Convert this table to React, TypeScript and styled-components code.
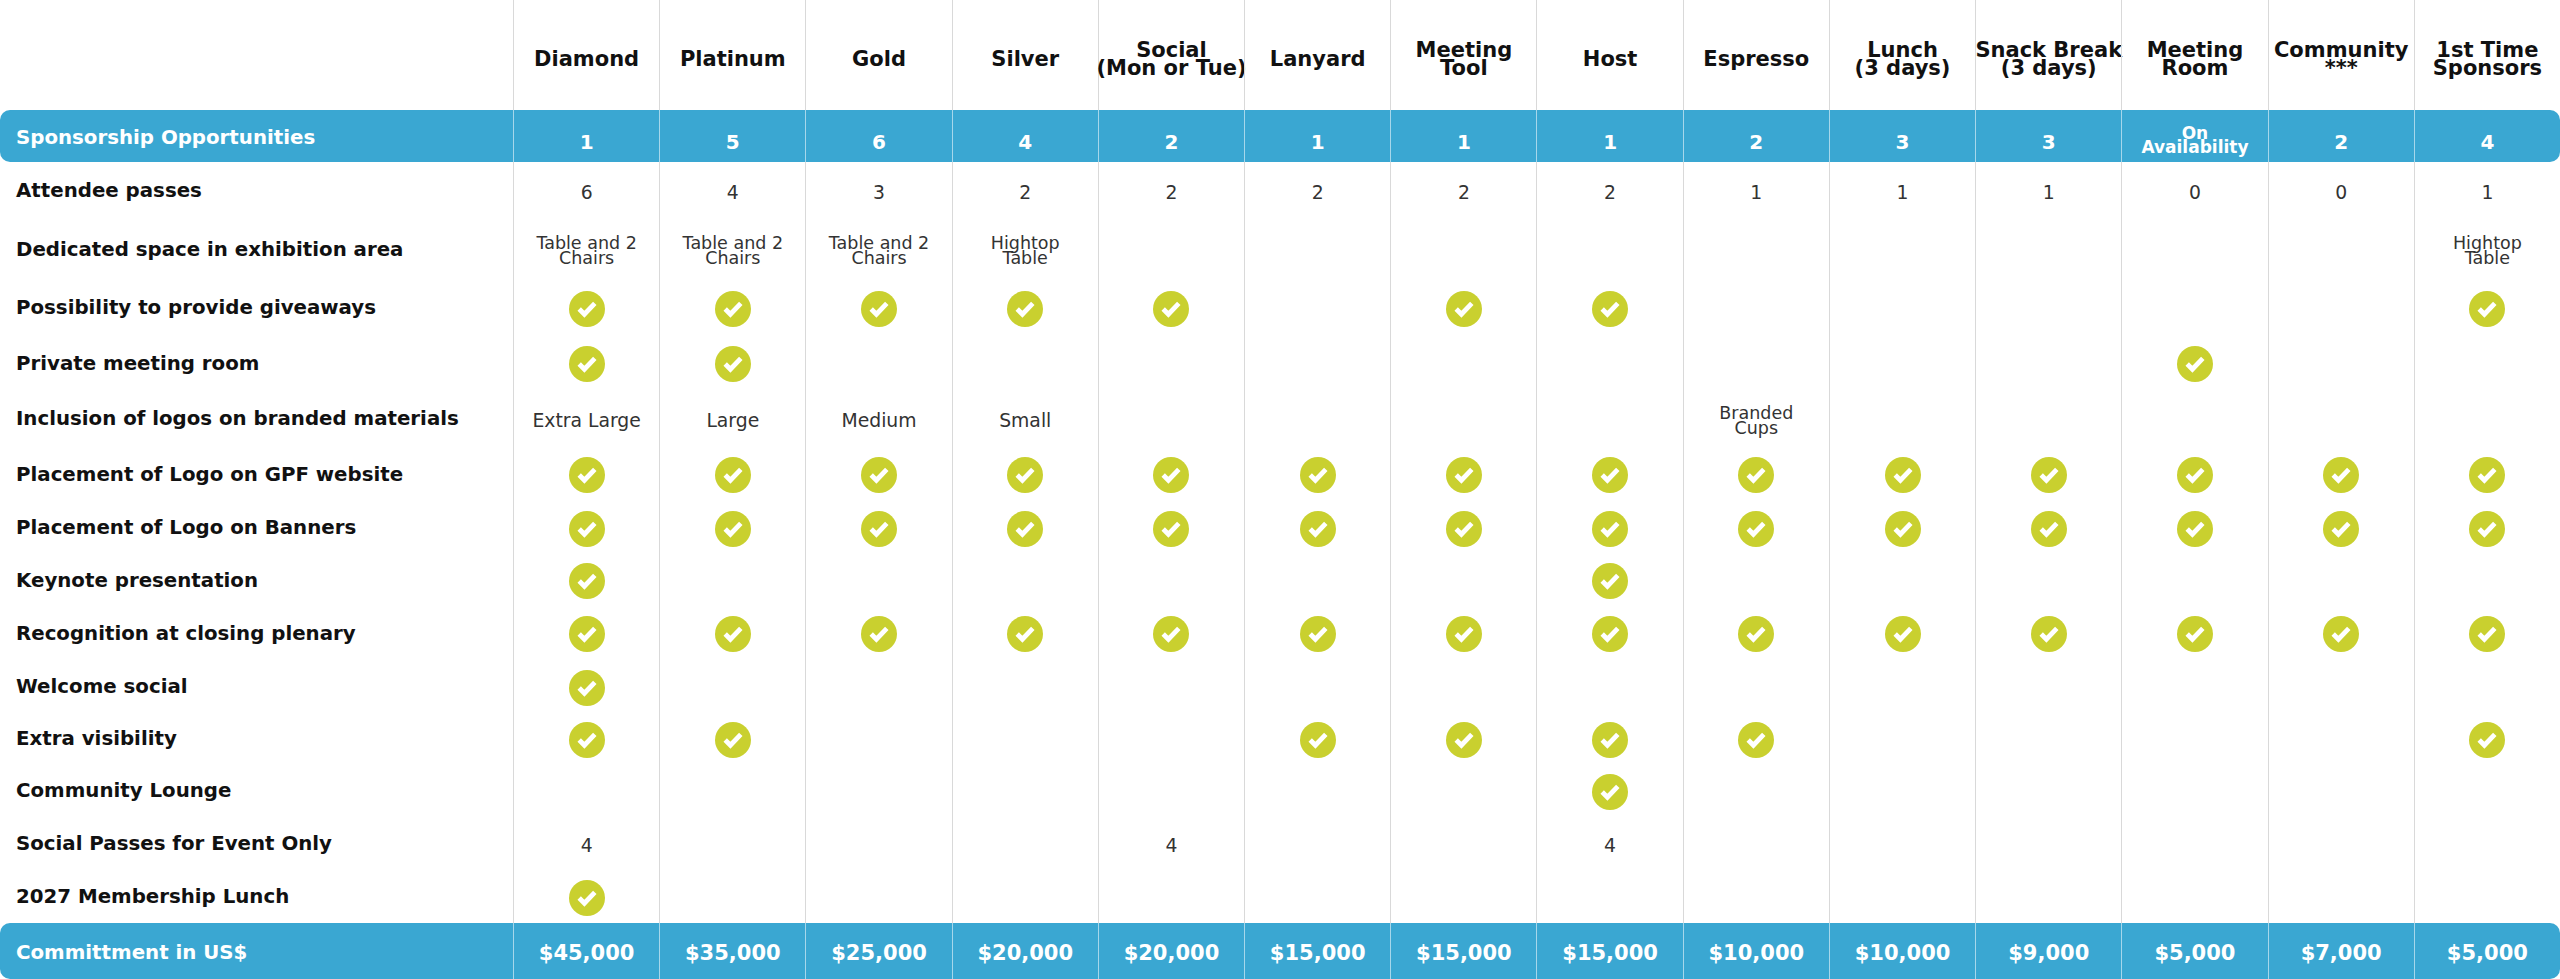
import React from 'react';
import styled, { createGlobalStyle, css } from 'styled-components';

const GlobalStyle = createGlobalStyle`
    html, body {
        margin: 0;
        padding: 0;
        background: #ffffff;
    }
    body {
        font-family: "DejaVu Sans", "Liberation Sans", sans-serif;
        color: #111111;
    }
`;

const BLUE = '#3aa7d2';
const LIME = '#c9d02f';

const Table = styled.div`
    width: 2560px;
    display: flex;
    flex-direction: column;
`;

const Row = styled.div<{ $h: number; $band?: boolean }>`
    display: grid;
    grid-template-columns: 513px repeat(14, minmax(0, 1fr));
    height: ${p => p.$h}px;
    ${p => p.$band && css`
        background: ${BLUE};
        border-radius: 10px;
        color: #ffffff;
    `}
`;

const Label = styled.div<{ $band?: boolean }>`
    display: flex;
    align-items: center;
    padding-left: 16px;
    padding-top: ${p => (p.$band ? '2px' : '0')};
    font-weight: bold;
    white-space: nowrap;
    font-size: 19.8px;
`;

const Cell = styled.div<{ $band?: boolean; $shift?: number }>`
    display: flex;
    align-items: center;
    justify-content: center;
    text-align: center;
    border-left: 1px solid ${p => (p.$band ? 'rgba(255, 255, 255, 0.55)' : '#d9d9d9')};
    padding-top: ${p => p.$shift ?? 0}px;
    box-sizing: border-box;
    white-space: pre;
    overflow: visible;
`;

const HeadText = styled.span`
    font-size: 21px;
    font-weight: bold;
    line-height: 18px;
    color: #111111;
`;

const BandText = styled.span<{ $small?: boolean; $big?: boolean }>`
    font-weight: bold;
    font-size: ${p => (p.$small ? '17px' : p.$big ? '21px' : '20px')};
    line-height: ${p => (p.$small ? '14px' : '22px')};
`;

const Value = styled.span<{ $small?: boolean }>`
    color: #333333;
    font-size: ${p => (p.$small ? '17.5px' : '18.8px')};
    line-height: ${p => (p.$small ? '15px' : '22px')};
`;

const Check = () => (
    <svg width="36" height="36" viewBox="0 0 36 36">
        <circle cx="18" cy="18" r="18" fill={LIME} />
        <path d="M10.2 18 L15.4 23.2 L25.8 12.4" fill="none" stroke="#ffffff" strokeWidth="4.8" />
    </svg>
);

const columns = [
    'Diamond', 'Platinum', 'Gold', 'Silver', 'Social\n(Mon or Tue)', 'Lanyard', 'Meeting\nTool',
    'Host', 'Espresso', 'Lunch\n(3 days)', 'Snack Break\n(3 days)', 'Meeting\nRoom', 'Community\n***', '1st Time\nSponsors',
];

const available = ['1', '5', '6', '4', '2', '1', '1', '1', '2', '3', '3', 'On\nAvailability', '2', '4'];

const prices = [
    '$45,000', '$35,000', '$25,000', '$20,000', '$20,000', '$15,000', '$15,000',
    '$15,000', '$10,000', '$10,000', '$9,000', '$5,000', '$7,000', '$5,000',
];

const X = 'check';
const _ = '';
const TC = 'Table and 2\nChairs';
const HT = 'Hightop\nTable';

const rows: { label: string; h: number; cells: string[] }[] = [
    { label: 'Attendee passes', h: 57, cells: ['6', '4', '3', '2', '2', '2', '2', '2', '1', '1', '1', '0', '0', '1'] },
    { label: 'Dedicated space in exhibition area', h: 60, cells: [TC, TC, TC, HT, _, _, _, _, _, _, _, _, _, HT] },
    { label: 'Possibility to provide giveaways', h: 57, cells: [X, X, X, X, X, _, X, X, _, _, _, _, _, X] },
    { label: 'Private meeting room', h: 54, cells: [X, X, _, _, _, _, _, _, _, _, _, X, _, _] },
    { label: 'Inclusion of logos on branded materials', h: 57, cells: ['Extra Large', 'Large', 'Medium', 'Small', _, _, _, _, 'Branded\nCups', _, _, _, _, _] },
    { label: 'Placement of Logo on GPF website', h: 54, cells: [X, X, X, X, X, X, X, X, X, X, X, X, X, X] },
    { label: 'Placement of Logo on Banners', h: 53, cells: [X, X, X, X, X, X, X, X, X, X, X, X, X, X] },
    { label: 'Keynote presentation', h: 52, cells: [X, _, _, _, _, _, _, X, _, _, _, _, _, _] },
    { label: 'Recognition at closing plenary', h: 54, cells: [X, X, X, X, X, X, X, X, X, X, X, X, X, X] },
    { label: 'Welcome social', h: 53, cells: [X, _, _, _, _, _, _, _, _, _, _, _, _, _] },
    { label: 'Extra visibility', h: 51, cells: [X, X, _, _, _, X, X, X, X, _, _, _, _, X] },
    { label: 'Community Lounge', h: 53, cells: [_, _, _, _, _, _, _, X, _, _, _, _, _, _] },
    { label: 'Social Passes for Event Only', h: 53, cells: ['4', _, _, _, '4', _, _, '4', _, _, _, _, _, _] },
    { label: '2027 Membership Lunch', h: 53, cells: [X, _, _, _, _, _, _, _, _, _, _, _, _, _] },
];

const BodyCell = ({ value }: { value: string }) => {
    if (value === X) {
        return <Cell $shift={2}><Check /></Cell>;
    }
    const small = value.includes('\n');
    return (
        <Cell $shift={small ? 4 : 5}>
            {value && <Value $small={small}>{value}</Value>}
        </Cell>
    );
};

const App = () => {
    return (
        <>
            <GlobalStyle />
            <Table>
                <Row $h={110}>
                    <div />
                    {columns.map(c => (
                        <Cell key={c} $shift={7}><HeadText>{c}</HeadText></Cell>
                    ))}
                </Row>
                <Row $h={52} $band>
                    <Label $band>Sponsorship Opportunities</Label>
                    {available.map((a, i) => (
                        <Cell key={i} $band $shift={a.includes('\n') ? 8 : 11}>
                            <BandText $small={a.includes('\n')}>{a}</BandText>
                        </Cell>
                    ))}
                </Row>
                {rows.map(r => (
                    <Row key={r.label} $h={r.h}>
                        <Label>{r.label}</Label>
                        {r.cells.map((v, i) => <BodyCell key={i} value={v} />)}
                    </Row>
                ))}
                <Row $h={56} $band>
                    <Label $band>Committment in US$</Label>
                    {prices.map((p, i) => (
                        <Cell key={i} $band $shift={3}><BandText $big>{p}</BandText></Cell>
                    ))}
                </Row>
            </Table>
        </>
    );
};

export default App;
